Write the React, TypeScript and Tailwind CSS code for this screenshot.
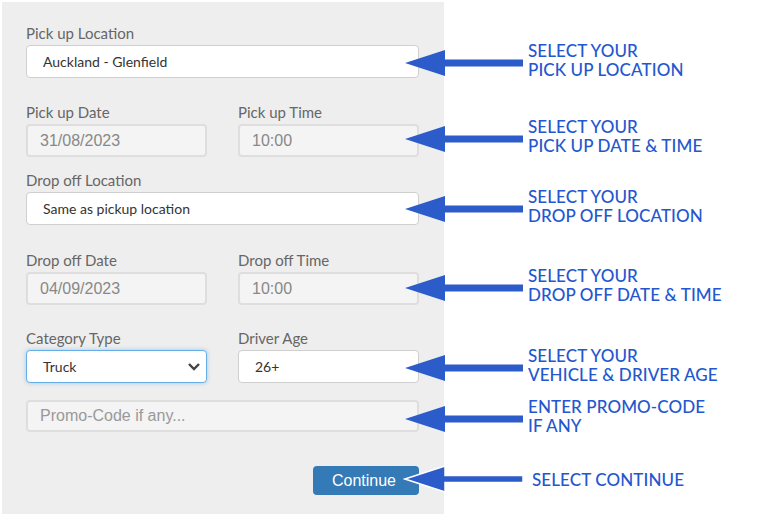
import React from "react";

const labelCls =
  "block h-[22px] leading-[22px] text-[15px] text-[#666666] mb-px font-['Lato','Noto_Sans',sans-serif]";
const whiteBox =
  "h-[33px] w-full bg-white border border-[#cfcfcf] rounded-[4px] flex items-center pl-[16px] text-[14px] text-[#333333] font-['Lato','Noto_Sans',sans-serif]";
const grayBox =
  "h-[33px] w-full bg-[#f4f4f4] border-2 border-[#dedede] rounded-[4px] flex items-center pl-[12px] text-[16px] text-[#888888] font-['Liberation_Sans',Arial,sans-serif]";

function Arrow({ outline }: { outline?: boolean }) {
  return (
    <svg className="shrink-0" width="122" height="28" viewBox="0 0 122 28">
      <polygon
        points="2,14 42,1 42,10.5 120,10.5 120,17.5 42,17.5 42,27"
        fill="#2c5bca"
        stroke={outline ? "#ffffff" : "none"}
        strokeWidth={outline ? 1.5 : 0}
      />
    </svg>
  );
}

function Note({ lines, className = "" }: { lines: string[]; className?: string }) {
  return (
    <div className={"flex items-center " + className}>
      <Arrow outline={lines.length === 1} />
      <div
        className={
          "text-[17px] leading-[19px] text-[#2457cf] font-['Lato','Noto_Sans',sans-serif] font-medium tracking-[0.1px] " +
          (lines.length === 1 ? "ml-[7px]" : "ml-[3px] mb-[6px]")
        }
      >
        {lines.map((l) => (
          <div key={l}>{l}</div>
        ))}
      </div>
    </div>
  );
}

export default function App() {
  return (
    <div className="flex w-[763px] h-[517px] bg-white overflow-hidden">
      <div className="ml-[2px] mt-[2px] w-[442px] h-[512px] shrink-0 bg-[#eeeeee] pt-[20px] pl-[24px] pr-[25px]">
        <div>
          <label className={labelCls}>Pick up Location</label>
          <div className={whiteBox}>Auckland - Glenfield</div>
        </div>

        <div className="mt-[23px] flex gap-[31px]">
          <div className="w-[181px]">
            <label className={labelCls}>Pick up Date</label>
            <div className={grayBox}>31/08/2023</div>
          </div>
          <div className="w-[181px]">
            <label className={labelCls}>Pick up Time</label>
            <div className={grayBox}>10:00</div>
          </div>
        </div>

        <div className="mt-[12px]">
          <label className={labelCls}>Drop off Location</label>
          <div className={whiteBox}>Same as pickup location</div>
        </div>

        <div className="mt-[24px] flex gap-[31px]">
          <div className="w-[181px]">
            <label className={labelCls}>Drop off Date</label>
            <div className={grayBox}>04/09/2023</div>
          </div>
          <div className="w-[181px]">
            <label className={labelCls}>Drop off Time</label>
            <div className={grayBox}>10:00</div>
          </div>
        </div>

        <div className="mt-[22px] flex gap-[31px]">
          <div className="w-[181px]">
            <label className={labelCls}>Category Type</label>
            <div className="h-[33px] w-full bg-white border border-[#66afe9] shadow-[0_0_4px_rgba(102,175,233,0.6)] rounded-[4px] flex items-center justify-between pl-[16px] pr-[5px] text-[14px] text-[#333333] font-['Lato','Noto_Sans',sans-serif]">
              <span>Truck</span>
              <svg width="14" height="9" viewBox="0 0 14 9">
                <path d="M2 2 L7 7 L12 2" fill="none" stroke="#444444" strokeWidth="2.4" />
              </svg>
            </div>
          </div>
          <div className="w-[181px]">
            <label className={labelCls}>Driver Age</label>
            <div className={whiteBox + " pl-[13px]"}>26+</div>
          </div>
        </div>

        <div className="mt-[17px] h-[32px] w-full bg-[#f4f4f4] border-2 border-[#dedede] rounded-[4px] flex items-center pl-[12px] text-[16px] text-[#999999] font-['Liberation_Sans',Arial,sans-serif]">
          Promo-Code if any...
        </div>

        <div className="mt-[34px] flex justify-end">
          <button className="w-[106px] h-[29px] bg-[#337ab7] rounded-[4px] text-white text-[16px] font-['Liberation_Sans',Arial,sans-serif] pr-[4px]">
            Continue
          </button>
        </div>
      </div>

      <div className="-ml-[41px] relative z-10 flex flex-col pt-[41px]">
        <Note lines={["SELECT YOUR", "PICK UP LOCATION"]} />
        <Note className="mt-[32px]" lines={["SELECT YOUR", "PICK UP DATE & TIME"]} />
        <Note className="mt-[26px]" lines={["SELECT YOUR", "DROP OFF LOCATION"]} />
        <Note className="mt-[35px]" lines={["SELECT YOUR", "DROP OFF DATE & TIME"]} />
        <Note className="mt-[36px]" lines={["SELECT YOUR", "VEHICLE & DRIVER AGE"]} />
        <Note className="mt-[7px]" lines={["ENTER PROMO-CODE", "IF ANY"]} />
        <Note className="mt-[24px]" lines={["SELECT CONTINUE"]} />
      </div>
    </div>
  );
}
